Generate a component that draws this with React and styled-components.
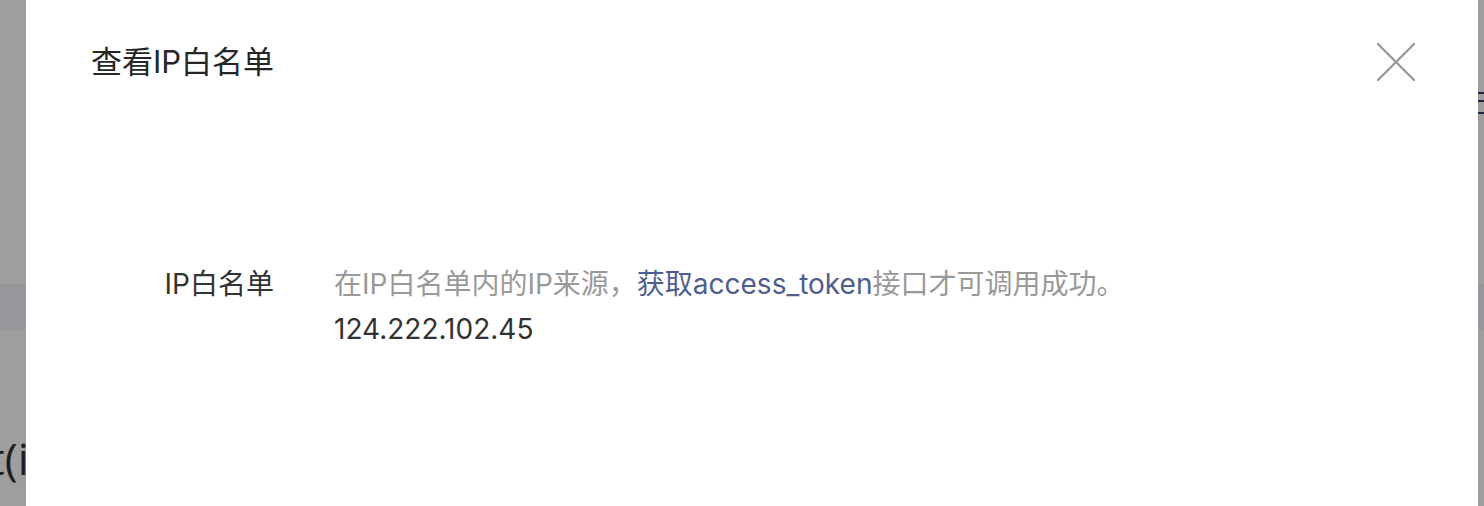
import styled, { createGlobalStyle } from "styled-components";

const GlobalStyle = createGlobalStyle`
    html, body {
        margin: 0;
        padding: 0;
        height: 100%;
        overflow: hidden;
    }
    body {
        font-family: "Inter", "Noto Sans CJK SC", sans-serif;
        background: #ffffff;
    }
`;

function App() {
    return (
        <>
            <GlobalStyle />
            <Page>
                {/* 뒤에 깔린 페이지 */}
                <BgTop>
                    <BgMenu width="20" height="40" viewBox="0 0 20 40">
                        <rect x="0" y="4" width="20" height="2" />
                        <rect x="0" y="12" width="20" height="2" />
                        <rect x="0" y="24" width="20" height="2" />
                    </BgMenu>
                </BgTop>
                <BgBand />
                <BgTitle>it(i</BgTitle>
            </Page>

            <Overlay>
                <Dialog>
                    <DialogHeader>
                        <Title>查看IP白名单</Title>
                        <CloseButton aria-label="close">
                            <svg width="38" height="38" viewBox="0 0 38 38">
                                <path d="M1 1 L37 37 M37 1 L1 37" stroke="#999" strokeWidth="2.4" strokeLinecap="round" />
                            </svg>
                        </CloseButton>
                    </DialogHeader>

                    <FormRow>
                        <Label>IP白名单</Label>
                        <Value>
                            <Hint>
                                在IP白名单内的IP来源，<Link>获取access_token</Link>接口才可调用成功。
                            </Hint>
                            <Ip>124.222.102.45</Ip>
                        </Value>
                    </FormRow>
                </Dialog>
            </Overlay>
        </>
    );
}

const Page = styled.div`
    height: 506px;
    overflow: hidden;
    display: flex;
    flex-direction: column;
`;

const BgTop = styled.div`
    height: 88px;
    display: flex;
    justify-content: flex-end;
    align-items: flex-end;
    margin-right: -14px;
`;

const BgMenu = styled.svg`
    fill: #2f3f66;
    display: block;
    margin-bottom: -40px;
`;

const BgBand = styled.div`
    margin-top: 196px;
    height: 46px;
    background: #f1f4f8;
`;

const BgTitle = styled.div`
    margin-top: 102px;
    margin-left: -22px;
    font-family: "Open Sans", sans-serif;
    font-size: 44px;
    line-height: 52px;
    color: #333;
`;

const Overlay = styled.div`
    position: fixed;
    inset: 0;
    background: rgba(0, 0, 0, 0.38);
    display: flex;
    padding: 0 6px 0 26px;
`;

const Dialog = styled.div`
    flex: 1;
    background: #fff;
    display: flex;
    flex-direction: column;
`;

const DialogHeader = styled.div`
    display: flex;
    justify-content: space-between;
    align-items: center;
    padding: 42px 63px 0 65px;
`;

const Title = styled.h2`
    margin: 0;
    font-weight: 400;
    font-size: 31px;
    line-height: 40px;
    color: #262626;
`;

const CloseButton = styled.button`
    border: none;
    background: none;
    padding: 0;
    cursor: pointer;
    display: flex;
`;

const FormRow = styled.div`
    display: flex;
    margin-top: 180px;
`;

const Label = styled.div`
    width: 248px;
    padding-right: 60px;
    text-align: right;
    font-size: 28px;
    line-height: 45px;
    color: #333;
`;

const Value = styled.div`
    display: flex;
    flex-direction: column;
`;

const Hint = styled.div`
    font-size: 28px;
    line-height: 45px;
    color: #999;
`;

const Link = styled.span`
    color: #4e5e8e;
    cursor: pointer;
`;

const Ip = styled.div`
    font-size: 28px;
    line-height: 45px;
    color: #333;
`;

export default App;
